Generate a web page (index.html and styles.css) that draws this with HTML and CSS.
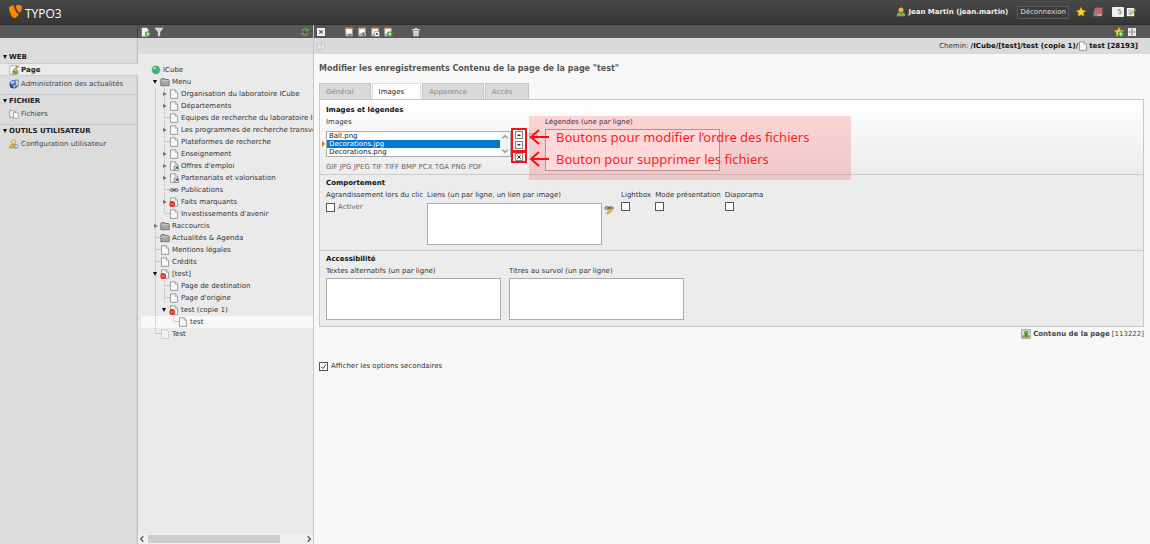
FILE: index.html
```html
<!DOCTYPE html>
<html lang="fr">
<head>
<meta charset="utf-8">
<title>TYPO3 – ICube</title>
<link rel="stylesheet" href="styles.css">
</head>
<body>
<svg class="defs" aria-hidden="true">
  <symbol id="page" viewBox="0 0 10 10"><path d="M1.5.8h4.700L8.600 3.200v6.200H1.500z" fill="#f8f8f8" stroke="#888" stroke-width=".8"/><path d="M6.200.8v2.400h2.400" fill="#ddd" stroke="#888" stroke-width=".6"/></symbol>
  <symbol id="pagepale" viewBox="0 0 10 10"><path d="M1.500.8h4.700L8.600 3.200v6.200H1.500z" fill="#f5f5f5" stroke="#bbb" stroke-width=".7"/><path d="M3 5h4M3 7h4" stroke="#ddd" stroke-width=".6"/></symbol>
  <symbol id="pageref" viewBox="0 0 10 10"><use href="#page"/><path d="M5 5h4.500v4.600H5z" fill="#eee" stroke="#777" stroke-width=".7"/><path d="M6 8.600l2-2M6.700 6.300h1.700v1.700" fill="none" stroke="#222" stroke-width=".8"/></symbol>
  <symbol id="pageno" viewBox="0 0 10 10"><use href="#page"/><circle cx="3.200" cy="7" r="2.900" fill="#dd3018"/><path d="M1.700 7h3" stroke="#ffb9a0" stroke-width=".9"/></symbol>
  <symbol id="folder" viewBox="0 0 10 10"><path d="M.8 8.700V2.500l.8-1h2.800l.8 1h3.200l.8.800v5.400z" fill="#a5a5a5" stroke="#666" stroke-width=".8"/><path d="M1.300 3.700h7.500" stroke="#ddd" stroke-width=".6"/></symbol>
  <symbol id="link" viewBox="0 0 10 10"><rect x=".8" y="3.700" width="4.200" height="2.600" rx="1.300" fill="#ccc" stroke="#666" stroke-width=".9"/><rect x="5" y="3.700" width="4.200" height="2.600" rx="1.300" fill="#ccc" stroke="#666" stroke-width=".9"/><path d="M3 5h4" stroke="#444"/></symbol>
  <symbol id="globe" viewBox="0 0 10 10"><circle cx="5" cy="5" r="4.300" fill="#5aa5cf"/><path d="M2 1.800C4 .3 7 .6 8 2.500L6.500 5 8 7.500 6 9.200 3.500 7.500 1 6z" fill="#43b552"/><path d="M2.200 3.200l2-1.200 1 1-1.500 1.500z" fill="#c5f0dd"/></symbol>
  <symbol id="plus" viewBox="0 0 10 10"><circle cx="6.800" cy="7" r="2.800" fill="#43a02c"/><path d="M6.800 5.400v3.200M5.200 7h3.200" stroke="#fff" stroke-width=".9"/></symbol>
  <symbol id="newpage" viewBox="0 0 10 10"><path d="M.8.800h4.700l2 2v6.700H.8z" fill="#eef1f5"/><use href="#plus"/></symbol>
  <symbol id="filter" viewBox="0 0 10 10"><path d="M1 .8h8v1L6.200 5v4.300H3.800V5L1 1.800z" fill="#d5d5d5"/></symbol>
  <symbol id="refresh" viewBox="0 0 10 10"><path d="M2 4C3 1.600 5.500 1.300 7.200 2.900M8 6C7 8.400 4.500 8.700 2.800 7.100" fill="none" stroke="#5aad46" stroke-width="1.400"/><path d="M8.600 1.300v3H5.600zM1.400 8.700v-3h3z" fill="#5aad46"/></symbol>
  <symbol id="close" viewBox="0 0 10 10"><path d="M1 1h8v8H1z" fill="#f2f2f2"/><path d="M3.300 3.300l3.400 3.400M6.700 3.300L3.300 6.700" stroke="#555" stroke-width="1.100"/></symbol>
  <symbol id="save" viewBox="0 0 10 10"><path d="M1.500.8h7v8.400h-7z" fill="#d3dbe5"/><path d="M1.500.8h7v1.200h-7z" fill="#e3904c"/><path d="M2.500 2.200h5v3.600h-5z" fill="#fff"/><path d="M2.500 7.200h5v1.500h-5z" fill="#59616e"/><path d="M3 7.500h1.500v1H3z" fill="#fff"/></symbol>
  <symbol id="saveview" viewBox="0 0 10 10"><use href="#save"/><path d="M3.500 7.300q3-3.600 6 0-3 3-6 0z" fill="#fff" stroke="#444" stroke-width=".5"/><circle cx="6.500" cy="7.200" r="1" fill="#222"/></symbol>
  <symbol id="saveclose" viewBox="0 0 10 10"><use href="#save"/><path d="M4.500 4.500h5v5h-5z" fill="#fff" stroke="#666" stroke-width=".5"/><path d="M5.800 5.800l2.400 2.400M8.200 5.800L5.800 8.200" stroke="#444" stroke-width=".8"/></symbol>
  <symbol id="savenew" viewBox="0 0 10 10"><use href="#save"/><use href="#plus"/></symbol>
  <symbol id="trash" viewBox="0 0 10 10"><path d="M1 2h2.500l.5-1h2l.5 1H9v1.500H1zM2 4h6l-.5 5.300h-5z" fill="#d5dae0"/><path d="M4 5v3M6 5v3" stroke="#a5a9af" stroke-width=".6"/></symbol>
  <symbol id="star" viewBox="0 0 10 10"><path d="M5 .3l1.400 3 3.300.4-2.400 2.200.6 3.400L5 7.700 2.100 9.300l.6-3.400L.3 3.700l3.300-.4z" fill="#ffd22e" stroke="#d79a12" stroke-width=".4"/></symbol>
  <symbol id="starplus" viewBox="0 0 10 10"><use href="#star"/><use href="#plus"/></symbol>
  <symbol id="expand" viewBox="0 0 10 10"><path d="M1 1h8v8H1z" fill="#eee"/><path d="M5 1.800v1.700M5 6.500v1.700M1.800 5h1.700M6.500 5h1.700" stroke="#555" stroke-width="1.200"/><path d="M4.300 4.300h1.400v1.400H4.300z" fill="#555"/></symbol>
  <symbol id="cache" viewBox="0 0 10 10"><path d="M.5 3.500h6v5.800h-6z" fill="#71927c"/><path d="M1.800.6h7.600v7H1.800z" fill="#c4666b"/><path d="M4 7h5v2H4z" fill="#b9a58f"/></symbol>
  <symbol id="note" viewBox="0 0 10 10"><path d="M.8 1h7.400v8.200H.8z" fill="#eef3fa"/><path d="M2 3h4M2 5h3M2 7h2" stroke="#8598ad" stroke-width=".7"/><path d="M4 8l.5-2 4-4 1.200 1.200-4 4z" fill="#dfb83b" stroke="#866b1c" stroke-width=".3"/></symbol>
  <symbol id="user" viewBox="0 0 10 10"><circle cx="5" cy="3" r="2.500" fill="#eeb12b"/><path d="M.8 9.300V7.400Q1.500 5.300 3.500 5.300L5 6.500l1.500-1.200Q8.700 5.500 9.200 7.400v1.900z" fill="#72b644"/></symbol>
  <symbol id="config" viewBox="0 0 10 10"><circle cx="4.500" cy="2.800" r="2.200" fill="#f8d9a5" stroke="#d98d32" stroke-width=".8"/><path d="M.8 9V7Q1.500 5.300 4.500 5.300T8 7v2z" fill="#f1a447" stroke="#cc7b24" stroke-width=".6"/><circle cx="7.300" cy="7.300" r="1.900" fill="#a9c4df" stroke="#5d83aa" stroke-width=".6"/><circle cx="7.300" cy="7.300" r=".7" fill="#fff"/></symbol>
  <symbol id="files" viewBox="0 0 10 10"><path d="M.7 1.300h3l.8 1h2v6H.7z" fill="#f4f4f4" stroke="#888" stroke-width=".7"/><path d="M4.500 3.700h3.400l1.300 1.200v4.400H4.500z" fill="#fff" stroke="#888" stroke-width=".7"/></symbol>
  <symbol id="pageedit" viewBox="0 0 10 10"><path d="M.8.800h6.700v8.400H.8z" fill="#fff" stroke="#888" stroke-width=".6"/><path d="M3.500 5.500h5.700v3.800H3.500z" fill="#63ae4a"/><path d="M4 6.500l.5-2L8 1l1.200 1-3.600 3.600z" fill="#e9b53b" stroke="#8d5a1e" stroke-width=".4"/><path d="M7.700 1.200l.7-.8 1.200 1-.8.900z" fill="#cf4426"/></symbol>
  <symbol id="news" viewBox="0 0 10 10"><circle cx="4.800" cy="5.200" r="4.300" fill="#365ea5"/><path d="M2 2.500l3-1 1 2-2 1.500-2 0zM5 5.500l2 .5-1.500 3-1.500-2z" fill="#a6c8ec"/><path d="M6 1h3.300v6H7z" fill="#c9d2e0" stroke="#445577" stroke-width=".5"/><path d="M1 6l2.500 3-2-.5z" fill="#162c5e"/></symbol>
  <symbol id="linkedit" viewBox="0 0 10 10"><use href="#link" y="-2"/><path d="M2.800 9l.7-2.300L7.700 3l1.500 1.600L5 8.500z" fill="#f3b93f" stroke="#936a21" stroke-width=".5"/></symbol>
  <symbol id="image" viewBox="0 0 10 10"><path d="M.7.700h8.600v8.600H.7z" fill="#d8e8f2" stroke="#888" stroke-width=".8"/><circle cx="5.200" cy="4" r="2.400" fill="#62b72a"/><path d="M1.300 6.500q4-1.500 7.400 0v2.300H1.300z" fill="#70b444"/><path d="M4.600 4h1v3.800h-1z" fill="#76521d"/></symbol>
  <symbol id="help" viewBox="0 0 10 10"><circle cx="5" cy="5" r="4" fill="#e8e8e8" stroke="#bcbcbc" stroke-width=".8"/><path d="M3.600 4Q3.700 2.700 5 2.700T6.300 4Q6.300 4.800 5 5.400v.6" fill="none" stroke="#aaa" stroke-width=".8"/><circle cx="5" cy="7.200" r=".5" fill="#aaa"/></symbol>
</svg>

<header class="topbar">
  <svg class="mark" viewBox="0 0 14 14" aria-hidden="true"><path d="M9.900 8.700c-.2.100-.4.100-.6.100C7.400 8.800 4.900 2.800 4.900 1.200c0-.6.100-.8.300-1C2.900.500.600 1.300.1 2.300c-.1.200-.1.500-.1.900 0 2.500 2.700 9.900 5.600 9.900 1.300 0 3.200-2 4.300-4.400zM8.700.1c2.600 0 4.300.4 4.300 2 0 3.200-1.500 5.300-2.400 5.300C9 7.400 7 3.200 7 1.300 7 .4 7.300.1 8.700.1z" fill="#ff8700"/></svg>
  <span class="brand">TYPO3</span>
  <div class="usertools">
    <svg class="ic"><use href="#user"/></svg>
    <b class="username">Jean Martin (jean.martin)</b>
    <button class="logout" type="button">Déconnexion</button>
    <svg class="ic"><use href="#star"/></svg>
    <svg class="ic"><use href="#cache"/></svg>
    <div class="quick"><input class="search" type="text" value="5" aria-label="Recherche"><svg class="ic"><use href="#note"/></svg></div>
  </div>
</header>

<div class="workspace">
  <nav class="modules" aria-label="Modules">
    <div class="strip"></div>
    <div class="menu">
      <section class="group">
        <h2>WEB</h2>
        <a class="module active" href="#"><svg class="ic"><use href="#pageedit"/></svg>Page</a>
        <a class="module" href="#"><svg class="ic"><use href="#news"/></svg>Administration des actualités</a>
      </section>
      <section class="group">
        <h2>FICHIER</h2>
        <a class="module" href="#"><svg class="ic"><use href="#files"/></svg>Fichiers</a>
      </section>
      <section class="group">
        <h2>OUTILS UTILISATEUR</h2>
        <a class="module" href="#"><svg class="ic"><use href="#config"/></svg>Configuration utilisateur</a>
      </section>
    </div>
  </nav>

  <aside class="treepane">
    <div class="strip treebar">
      <svg class="ic"><use href="#newpage"/></svg>
      <svg class="ic"><use href="#filter"/></svg>
      <svg class="ic end"><use href="#refresh"/></svg>
    </div>
    <div class="substrip"></div>
    <ul class="tree">
      <li><svg class="ic"><use href="#globe"/></svg><a href="#">ICube</a></li>
      <li><i class="g open"></i><svg class="ic"><use href="#folder"/></svg><a href="#">Menu</a></li>
      <li><i class="g v"></i><i class="g v shut"></i><svg class="ic"><use href="#page"/></svg><a href="#">Organisation du laboratoire ICube</a></li>
      <li><i class="g v"></i><i class="g v shut"></i><svg class="ic"><use href="#page"/></svg><a href="#">Départements</a></li>
      <li><i class="g v"></i><i class="g v h"></i><svg class="ic"><use href="#page"/></svg><a href="#">Equipes de recherche du laboratoire ICube</a></li>
      <li><i class="g v"></i><i class="g v shut"></i><svg class="ic"><use href="#page"/></svg><a href="#">Les programmes de recherche transverses</a></li>
      <li><i class="g v"></i><i class="g v h"></i><svg class="ic"><use href="#page"/></svg><a href="#">Plateformes de recherche</a></li>
      <li><i class="g v"></i><i class="g v shut"></i><svg class="ic"><use href="#page"/></svg><a href="#">Enseignement</a></li>
      <li><i class="g v"></i><i class="g v shut"></i><svg class="ic"><use href="#pageref"/></svg><a href="#">Offres d'emploi</a></li>
      <li><i class="g v"></i><i class="g v shut"></i><svg class="ic"><use href="#pageref"/></svg><a href="#">Partenariats et valorisation</a></li>
      <li><i class="g v"></i><i class="g v h"></i><svg class="ic"><use href="#link"/></svg><a href="#">Publications</a></li>
      <li><i class="g v"></i><i class="g v shut"></i><svg class="ic"><use href="#pageno"/></svg><a href="#">Faits marquants</a></li>
      <li><i class="g v"></i><i class="g half h"></i><svg class="ic"><use href="#page"/></svg><a href="#">Investissements d'avenir</a></li>
      <li><i class="g v shut"></i><svg class="ic"><use href="#folder"/></svg><a href="#">Raccourcis</a></li>
      <li><i class="g v h"></i><svg class="ic"><use href="#folder"/></svg><a href="#">Actualités &amp; Agenda</a></li>
      <li><i class="g v h"></i><svg class="ic"><use href="#page"/></svg><a href="#">Mentions légales</a></li>
      <li><i class="g v h"></i><svg class="ic"><use href="#page"/></svg><a href="#">Crédits</a></li>
      <li><i class="g v open"></i><svg class="ic"><use href="#pageno"/></svg><a href="#">[test]</a></li>
      <li><i class="g v"></i><i class="g v h"></i><svg class="ic"><use href="#page"/></svg><a href="#">Page de destination</a></li>
      <li><i class="g v"></i><i class="g v h"></i><svg class="ic"><use href="#page"/></svg><a href="#">Page d'origine</a></li>
      <li><i class="g v"></i><i class="g open"></i><svg class="ic"><use href="#pageno"/></svg><a href="#">test (copie 1)</a></li>
      <li class="current"><i class="g v"></i><i class="g"></i><i class="g half h"></i><svg class="ic"><use href="#page"/></svg><a href="#">test</a></li>
      <li><i class="g half h"></i><svg class="ic"><use href="#pagepale"/></svg><a href="#">Test</a></li>
    </ul>
    <div class="hscroll" aria-hidden="true">
      <svg class="chev" viewBox="0 0 6 6"><path d="M4 1L2 3l2 2"/></svg>
      <span class="track"><span class="thumb"></span></span>
      <svg class="chev" viewBox="0 0 6 6"><path d="M2 1l2 2-2 2"/></svg>
    </div>
  </aside>

  <main class="doc">
    <div class="strip docbar">
      <svg class="ic"><use href="#close"/></svg>
      <div class="saves">
        <svg class="ic"><use href="#save"/></svg>
        <svg class="ic"><use href="#saveview"/></svg>
        <svg class="ic"><use href="#saveclose"/></svg>
        <svg class="ic"><use href="#savenew"/></svg>
      </div>
      <svg class="ic"><use href="#trash"/></svg>
      <svg class="ic end"><use href="#starplus"/></svg>
      <svg class="ic"><use href="#expand"/></svg>
    </div>
    <div class="substrip pathbar">
      <svg class="ic"><use href="#help"/></svg>
      <span class="path">Chemin: <b>/ICube/[test]/test (copie 1)/</b></span>
      <svg class="ic"><use href="#page"/></svg>
      <b class="leaf">test [28193]</b>
    </div>

    <div class="content">
      <h1>Modifier les enregistrements Contenu de la page de la page "test"</h1>
      <div class="tabs" role="tablist">
        <button class="tab" type="button" role="tab">Général</button>
        <button class="tab selected" type="button" role="tab" aria-selected="true">Images</button>
        <button class="tab" type="button" role="tab">Apparence</button>
        <button class="tab" type="button" role="tab">Accès</button>
      </div>
      <form class="panel">
        <section class="palette first">
          <h3>Images et légendes</h3>
          <div class="fields">
            <div class="field">
              <label for="images">Images</label>
              <div class="picker">
                <div class="files">
                  <div class="listbox">
                    <select id="images" size="3">
                      <option>Ball.png</option>
                      <option selected>Decorations.jpg</option>
                      <option>Decorations.png</option>
                    </select>
                    <span class="vscroll" aria-hidden="true">
                      <svg class="chev" viewBox="0 0 6 6"><path d="M1 4l2-2 2 2"/></svg>
                      <svg class="chev" viewBox="0 0 6 6"><path d="M1 2l2 2 2-2"/></svg>
                    </span>
                  </div>
                  <p class="formats">GIF JPG JPEG TIF TIFF BMP PCX TGA PNG PDF</p>
                </div>
                <div class="actions">
                  <div class="framed order">
                    <button class="mini" type="button" aria-label="Monter"><svg viewBox="0 0 6 6"><path d="M1 4l2-2 2 2z"/></svg></button>
                    <button class="mini" type="button" aria-label="Descendre"><svg viewBox="0 0 6 6"><path d="M1 2l2 2 2-2z"/></svg></button>
                  </div>
                  <div class="framed">
                    <button class="mini" type="button" aria-label="Supprimer"><svg viewBox="0 0 6 6"><path class="x" d="M1.300 1.300l3.400 3.400M4.700 1.300L1.300 4.700"/></svg></button>
                  </div>
                </div>
                <span class="browse"></span>
              </div>
            </div>
            <div class="field captions">
              <label for="captions">Légendes (une par ligne)</label>
              <textarea id="captions"></textarea>
            </div>
          </div>
          <div class="annotation">
            <p><svg class="arrow" viewBox="0 0 20 16"><path d="M20 8H2M10 1L2 8l8 7"/></svg>Boutons pour modifier l’ordre des fichiers</p>
            <p><svg class="arrow" viewBox="0 0 20 16"><path d="M20 8H2M10 1L2 8l8 7"/></svg>Bouton pour supprimer les fichiers</p>
          </div>
        </section>

        <section class="palette">
          <h3>Comportement</h3>
          <div class="fields behaviour">
            <div class="field">
              <span class="lab">Agrandissement lors du clic</span>
              <label class="check"><input type="checkbox">Activer</label>
            </div>
            <div class="field">
              <label for="links">Liens (un par ligne, un lien par image)</label>
              <div class="linked"><textarea id="links"></textarea><svg class="ic"><use href="#linkedit"/></svg></div>
            </div>
            <div class="field options">
              <div class="field"><label for="lb">Lightbox</label><input id="lb" type="checkbox"></div>
              <div class="field"><label for="mp">Mode présentation</label><input id="mp" type="checkbox"></div>
              <div class="field"><label for="dp">Diaporama</label><input id="dp" type="checkbox"></div>
            </div>
          </div>
        </section>

        <section class="palette">
          <h3>Accessibilité</h3>
          <div class="fields">
            <div class="field"><label for="alt">Textes alternatifs (un par ligne)</label><textarea id="alt"></textarea></div>
            <div class="field"><label for="titles">Titres au survol (un par ligne)</label><textarea id="titles"></textarea></div>
          </div>
        </section>
      </form>
      <div class="record"><svg class="ic"><use href="#image"/></svg><b>Contenu de la page</b> <span>[113222]</span></div>
      <label class="secondary"><input type="checkbox" checked>Afficher les options secondaires</label>
    </div>
  </main>
</div>
</body>
</html>
```

FILE: styles.css
```css
* { box-sizing: border-box; }
body {
  margin: 0;
  height: 100vh;
  display: flex;
  flex-direction: column;
  font: 7px/12px "DejaVu Sans", Verdana, sans-serif;
  color: #333;
  background: #f8f8f8;
  overflow: hidden;
}
h1, h2, h3, p, ul { margin: 0; padding: 0; }
a { color: inherit; text-decoration: none; }
button, input, select, textarea { font: inherit; margin: 0; }
.defs { position: absolute; width: 0; height: 0; }
.ic { width: 10px; height: 10px; flex: none; display: block; }
.end { margin-left: auto; }

/* Top bar */
.topbar {
  display: flex;
  align-items: center;
  height: 25px;
  flex: none;
  padding: 0 14px 0 9px;
  background: linear-gradient(#484848, #363636);
  border-bottom: 1px solid #2c2c2c;
}
.mark { width: 14px; height: 14px; }
.brand {
  margin-left: 2px;
  padding-top: 2px;
  font: 12px/23px "Open Sans", sans-serif;
  color: #fff;
}
.usertools { display: flex; align-items: center; margin-left: auto; }
.username { margin: 0 9px 0 2px; color: #f0f0f0; }
.logout {
  height: 13px;
  margin-right: 7px;
  padding: 0 2px;
  line-height: 11px;
  color: #ddd;
  background: #3c3c3c;
  border: 1px solid #5c5c5c;
}
.usertools .ic + .ic { margin-left: 7px; }
.quick { display: flex; align-items: center; gap: 2px; margin-left: 9px; }
.search {
  width: 12px;
  height: 10px;
  padding: 0 2px;
  text-align: right;
  line-height: 10px;
  color: #666;
  background: #eee;
  border: 0;
  border-radius: 1px;
}

/* Three panes */
.workspace { display: flex; flex: 1; min-height: 0; }
.strip {
  display: flex;
  align-items: center;
  height: 13px;
  flex: none;
  background: #585858;
}
.substrip { height: 16px; flex: none; background: #dadada; }
.modules {
  width: 138px;
  flex: none;
  display: flex;
  flex-direction: column;
  background: #dcdcdc;
}
.modules .strip { border-right: 1px solid #444; }
.menu {
  flex: 1;
  padding-top: 13px;
  background: linear-gradient(to left, #c2c2c2 1px, #d2d2d2 1px, #d2d2d2 2px, transparent 2px);
}
.group { padding-bottom: 4px; }
.group + .group { border-top: 1px solid #c8c8c8; margin-right: 2px; }
.group h2 {
  display: flex;
  align-items: center;
  gap: 2px;
  padding-left: 3px;
  font-size: 7px;
  line-height: 12px;
  color: #222;
}
.group h2::before {
  content: "";
  border: 2px solid transparent;
  border-top: 4px solid #111;
  border-bottom: 0;
}
.module {
  display: flex;
  align-items: center;
  gap: 2px;
  height: 13px;
  padding-left: 9px;
  color: #444;
}
.module.active {
  font-weight: bold;
  color: #222;
  background: #ebebeb;
  border-top: 1px solid #ccc;
  border-bottom: 1px solid #ccc;
}
.module.active + .module { margin-top: 1px; }

.treepane {
  width: 176px;
  flex: none;
  display: flex;
  flex-direction: column;
  background: #eaeaea;
  border-right: 1px solid #c6c6c6;
}
.treebar { gap: 3px; padding: 0 3px; }
.tree { flex: 1; list-style: none; padding-top: 10px; overflow: hidden; }
.tree li {
  display: flex;
  align-items: center;
  height: 12px;
  margin-left: 3px;
  padding-left: 10px;
  white-space: nowrap;
}
.tree li a { padding-left: 2px; }
.tree .current { background: #f8f8f8; }
.g {
  position: relative;
  width: 9px;
  height: 12px;
  flex: none;
  background-repeat: no-repeat;
}
.g.v { background-image: repeating-linear-gradient(#b4b4b4 0 1px, transparent 1px 2px); background-size: 1px 12px; background-position: 4px 0; }
.g.half { background-image: repeating-linear-gradient(#b4b4b4 0 1px, transparent 1px 2px); background-size: 1px 6px; background-position: 4px 0; }
.g.h::after {
  content: "";
  position: absolute;
  left: 5px;
  top: 5px;
  width: 5px;
  border-top: 1px solid #c4c4c4;
}
.g.shut::after {
  content: "";
  position: absolute;
  left: 3px;
  top: 4px;
  border: 2px solid transparent;
  border-left: 4px solid #777;
  border-right: 0;
}
.g.open::after {
  content: "";
  position: absolute;
  left: 2px;
  top: 4px;
  border: 2px solid transparent;
  border-top: 4px solid #111;
  border-bottom: 0;
}
.hscroll { display: flex; align-items: center; height: 10px; background: #f0f0f0; }
.chev { width: 8px; height: 8px; fill: none; stroke: #555; stroke-width: 1; flex: none; }
.track { flex: 1; height: 8px; padding: 0 16px 0 2px; margin-right: 9px; }
.thumb { display: block; height: 8px; background: #cdcdcd; }

/* Document pane */
.doc { flex: 1; min-width: 0; display: flex; flex-direction: column; }
.docbar { padding: 0 13px 0 2px; gap: 3px; }
.saves { display: flex; gap: 3px; margin: 0 15px; }
.pathbar { display: flex; align-items: center; padding: 0 12px 0 2px; white-space: nowrap; }
.path { margin-left: auto; }
.pathbar b { color: #111; }
.leaf { margin-left: 1px; }
.content { padding: 9px 6px 0 5px; }
h1 { font-size: 8px; line-height: 12px; color: #555; white-space: nowrap; }
.tabs { display: flex; gap: 1px; margin-top: 8px; }
.tab {
  height: 16px;
  padding: 0 16px 0 6px;
  color: #888;
  background: #dadada;
  border: 1px solid #c4c4c4;
  border-bottom: 0;
}
.tab.selected { color: #222; background: #fff; border-color: #ddd; }
.panel { border: 1px solid #c8c8c8; }
.palette { position: relative; height: 76px; padding: 4px 6px 0; background: #ececec; }
.palette + .palette { border-top: 1px solid #ccc; padding-top: 2px; }
.palette.first { height: 74px; z-index: 1; background: linear-gradient(#fff, #ececec); }
h3 { font-size: 7px; line-height: 12px; color: #111; }
.fields { display: flex; gap: 8px; }
.field { display: flex; flex-direction: column; align-items: flex-start; white-space: nowrap; }
textarea {
  display: block;
  width: 175px;
  height: 42px;
  margin-top: 1px;
  padding: 1px;
  resize: none;
  background: #fff;
  border: 1px solid #aaa;
}
.picker { display: flex; align-items: flex-start; }
.listbox {
  position: relative;
  display: flex;
  width: 185px;
  height: 26px;
  margin-top: 3px;
  background: #fff;
  border: 1px solid #aaa;
}
.listbox::before {
  content: "";
  position: absolute;
  left: -5px;
  top: 9px;
  border: 3px solid transparent;
  border-left: 3px solid #c77a1c;
  border-right: 0;
}
select {
  flex: 1;
  padding: 0;
  overflow: hidden;
  background: #fff;
  border: 0;
  outline: 0;
  color: #222;
  scrollbar-width: none;
}
option { height: 8px; min-height: 0; padding: 0 2px; line-height: 8px; font-size: 7px; }
option:checked { color: #fff; background: #0078d7 linear-gradient(#0078d7, #0078d7); }
.vscroll { display: flex; flex-direction: column; justify-content: space-between; padding: 1px; background: #f4f4f4; }
.vscroll .chev { stroke: #999; }
.actions { width: 16px; }
.framed { border: 2px solid #f0141c; padding: 0 2px; }
.order { padding: 1px 2px; }
.framed + .framed { border-top-width: 1px; }
.mini { display: block; width: 8px; height: 8px; padding: 0; background: #f4f4f4; border: 1px solid #888; }
.mini + .mini { margin-top: 2px; }
.mini svg { display: block; width: 6px; height: 6px; fill: #333; }
.x { stroke: #333; fill: none; }
.browse { width: 8px; height: 6px; margin: 5px 0 0 2px; border: 1px solid #bbb; }
.formats { margin-top: 4px; color: #666; }
.annotation {
  position: absolute;
  left: 209px;
  top: 16px;
  width: 322px;
  padding: 10px 0;
  font: 13px/22px "Noto Sans", "Open Sans", sans-serif;
  color: #ff1c1c;
  background: rgba(255, 0, 0, .15);
  white-space: nowrap;
}
.annotation p { display: flex; align-items: center; gap: 7px; }
.arrow { width: 20px; height: 16px; fill: none; stroke: #ff0a14; stroke-width: 2; }
.linked { display: flex; gap: 2px; }
.linked .ic { margin-top: 4px; }
.linked textarea { margin-top: 2px; }
.behaviour { gap: 4px; }
.options.field { flex-direction: row; gap: 4px; margin-left: 3px; }
.check, .secondary { display: flex; align-items: center; gap: 3px; }
.check { color: #666; }
input[type="checkbox"] {
  appearance: none;
  width: 9px;
  height: 9px;
  background: #fff;
  border: 1px solid #555;
}
.options input { margin-top: 1px; }
input[type="checkbox"]:checked {
  background: #fff url("data:image/svg+xml,%3Csvg xmlns='http://www.w3.org/2000/svg' viewBox='0 0 7 7'%3E%3Cpath d='M1 3.500l2 2 3-4' fill='none' stroke='%23333'/%3E%3C/svg%3E");
}
.record {
  display: flex;
  justify-content: flex-end;
  align-items: center;
  gap: 2px;
  margin-top: 1px;
  color: #444;
}
.secondary { margin-top: 20px; color: #333; }
```
